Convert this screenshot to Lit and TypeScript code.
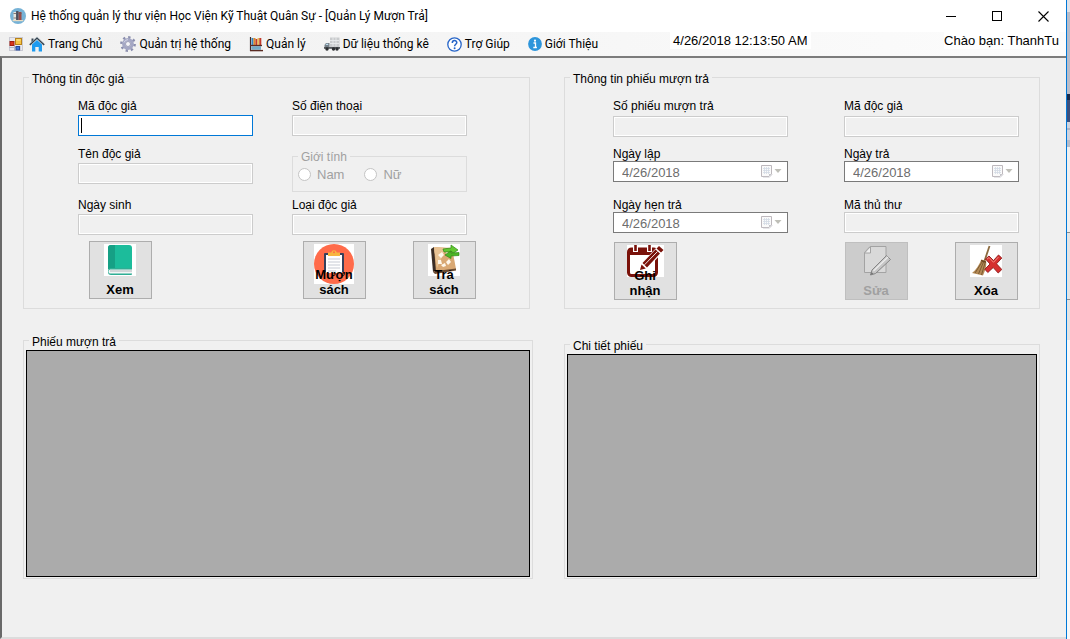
import { LitElement, html, css, svg, nothing, TemplateResult } from "lit";
import { customElement, property } from "lit/decorators.js";

const icon = (w: number, h: number, body: unknown) =>
  html`<svg width=${w} height=${h} viewBox="0 0 ${w} ${h}" aria-hidden="true">${body}</svg>`;

const appIcon = icon(16, 16, svg`
  <circle cx="8" cy="8" r="8" fill="#76b2d6"/>
  <rect x="3.5" y="4" width="2.6" height="8" fill="#e8e4dc"/>
  <rect x="6.1" y="3" width="2.4" height="9" fill="#4d4f5c"/>
  <rect x="8.5" y="4" width="3" height="8" fill="#9b4a45"/>
  <path d="M3.5 5.5h2.6M3.5 10h2.6M8.5 5.5h3" stroke="#6b5b5b" stroke-width=".8"/>
  <rect x="2.6" y="12" width="10.6" height="1.2" fill="#e9dcc3"/>`);

const formIcon = icon(14, 14, svg`
  <rect x=".5" y=".5" width="13" height="13" fill="#e8e8ee" stroke="#c9c9d2"/>
  <path d="M0 10.5h8M5.5 9v5M11 9v5" stroke="#b3b6c6"/>
  <rect x="1" y="4.5" width="4" height="4" fill="#d8341b" stroke="#9e1e10"/>
  <rect x="6.5" y="1.5" width="6" height="6" fill="#f6c343" stroke="#b8821a"/>
  <path d="M7.5 3h4" stroke="#fff0a8"/>
  <rect x="7" y="9.5" width="3.5" height="3.5" fill="#3f74d8" stroke="#24499b"/>`);

const homeIcon = icon(16, 16, svg`
  <path d="M3 15.5V8.5L8 4l5 4.500v7H9.700v-4.500H6.300v4.500z" fill="#1e9bf0"/>
  <path d="M2.500 2.500h2v3.500h-2z" fill="#3a4652"/>
  <path d="M.8 8.800L8 2l7.200 6.800" fill="none" stroke="#33424f" stroke-width="1.600"/>
  <path d="M1.500 7L8 .9 14.500 7" fill="none" stroke="#aeb9c2" stroke-width=".7"/>`);

const gearIcon = icon(16, 16, svg`
  <circle cx="8" cy="8" r="6.600" fill="none" stroke="#8b8fae" stroke-width="2.600" stroke-dasharray="2.300 2.880"/>
  <circle cx="8" cy="8" r="4.300" fill="none" stroke="#a4a7c4" stroke-width="3.200"/>
  <circle cx="8" cy="8" r="2.500" fill="#f4f4f8" stroke="#7d80a0" stroke-width=".7"/>
  <path d="M4 6.500A4.300 4.300 0 0 1 8 3.600" stroke="#d6d8ea" fill="none"/>`);

const booksIcon = icon(14, 15, svg`
  <path d="M1.500 0v14" stroke="#402a2a" stroke-width="1.200"/>
  <rect x="2.500" y="1" width="2" height="7" fill="#2f86c4"/>
  <rect x="4.500" y="1" width="2" height="7" fill="#e08a2c"/>
  <rect x="6.500" y="2" width="2" height="6" fill="#c23a2c"/>
  <rect x="8.500" y="1" width="1.800" height="7" fill="#e9c15a"/>
  <rect x="10.300" y="1" width="2" height="7" fill="#c23a2c"/>
  <path d="M1 8.500h12" stroke="#5a2b22" stroke-width="1.300"/>
  <rect x="2.500" y="9.500" width="9.500" height="3" fill="#2f7fa8"/>
  <path d="M2.500 11h9.500" stroke="#d9eef5" stroke-width=".8"/>
  <path d="M1 13.600h13" stroke="#5a2b22" stroke-width="1.400"/>`);

const truckIcon = icon(16, 14, svg`
  <rect x="6" y=".5" width="9.500" height="9.500" fill="#c9cbcd"/>
  <path d="M6 3.500h9M6 6.500h9M9 .5v9M12 .5v9" stroke="#e9ebec" stroke-width=".9"/>
  <path d="M.5 11V8l1.500-2h3.500v5z" fill="#77818a"/>
  <path d="M1.500 8l.8-1.200h1.900V8z" fill="#bfe0ee"/>
  <rect x="0" y="10" width="16" height="1.800" fill="#54585c"/>
  <circle cx="3" cy="12" r="1.700" fill="#2c2e30"/><circle cx="9.500" cy="12" r="1.700" fill="#2c2e30"/>
  <circle cx="13" cy="12" r="1.700" fill="#2c2e30"/>`);

const helpIcon = icon(15, 15, svg`
  <circle cx="7.500" cy="7.500" r="6.700" fill="#fff" stroke="#2765c8" stroke-width="1.300"/>
  <path d="M5.300 5.900c0-3 4.500-3 4.500-.3 0 1.700-2.200 1.700-2.200 3.600" fill="none" stroke="#2765c8" stroke-width="1.500"/>
  <circle cx="7.600" cy="11.300" r="1" fill="#2765c8"/>`);

const infoIcon = icon(14, 14, svg`
  <circle cx="7" cy="7" r="6.900" fill="#2d95db"/>
  <circle cx="7" cy="3.700" r="1.100" fill="#fff"/>
  <path d="M5.500 6h2v4.500M5.300 10.500h3.600" fill="none" stroke="#fff" stroke-width="1.300"/>`);

const calendarIcon = icon(21, 13, svg`
  <path d="M.5 .5h10v8.500l-2.500 2.500h-7.500z" fill="#fafafa" stroke="#bdb8bd"/>
  <path d="M2 3.500h7M2 5.500h7M2 7.500h7M3.500 2v7M5.500 2v7M7.500 2v7" stroke="#d3dbe4" stroke-width=".8"/>
  <path d="M10.500 9h-2.500v2.500z" fill="#c4c4ca"/>
  <path d="M2 12.300h6.500l3-3" stroke="#d8d8dc" fill="none" stroke-width=".8"/>
  <path d="M13.500 4h7l-3.500 4z" fill="#bfbfb8"/>`);

const bookArt = icon(32, 32, svg`
  <rect width="32" height="32" fill="#fff"/>
  <path d="M7 1h18a3 3 0 0 1 3 3v21H4V4a3 3 0 0 1 3-3z" fill="#1cbc9b"/>
  <path d="M7 1h4v24H4V4a3 3 0 0 1 3-3z" fill="#16a085"/>
  <path d="M4 27a3 3 0 0 1 3-3h21v6a1 1 0 0 1-1 1H7a3 3 0 0 1-3-3z" fill="#2fae94"/>
  <path d="M6 25.500h22v4H7a2 2 0 0 1-1-4z" fill="#f2f5f5"/>
  <path d="M6 27h22" stroke="#b9c0c4" stroke-width="1.200"/>`);

const borrowArt = icon(40, 40, svg`
  <rect width="40" height="40" fill="#fff"/>
  <circle cx="20" cy="20" r="20" fill="#ff6b4a"/>
  <path d="M10 10a1 1 0 0 1 1-1h18a1 1 0 0 1 1 1v18H10z" fill="#36405c"/>
  <rect x="12" y="11" width="16" height="18" fill="#fff"/>
  <path d="M14 12V8.500h3.200a2.900 2.900 0 0 1 5.600 0H26V12z" fill="#f8b640"/>
  <circle cx="20" cy="8.300" r="1" fill="#ff6b4a"/>
  <path d="M14 15h12M14 18h12M14 21h12M14 24h12M14 27h8" stroke="#c7cbd4"/>`);

const returnArt = icon(32, 32, svg`
  <rect width="32" height="32" fill="#fff"/>
  <path d="M3 5l3-2 3 23-4 2z" fill="#3b2d25"/>
  <path d="M6 3l18 1 4 21-20 3z" fill="#d9a873"/>
  <path d="M6 3l12 1-9 20z" fill="#e8c293"/>
  <path d="M5 28l3-1 20-2.500v2L7 30z" fill="#6a4a30"/>
  <path d="M10 11l4-3 2 3-3 3zM18 8l4 1 1 4-4-1zM21 15l2 3-3 3-2-3zM10 16l3 0 1 4-4 0zM13 21l4-2 1 3-3 1z" fill="#fff7ea"/>
  <path d="M15 5l8-1V1l7 5-6 4V7.500l-8 .5z" fill="#63c832" stroke="#2f8a17" stroke-width=".7"/>
  <path d="M31 8.500l-8 .5V6.800L17 11l6 3.500V12l8-.5z" fill="#4db526" stroke="#2f8a17" stroke-width=".7"/>`);

const recordArt = icon(37, 32, svg`
  <rect width="37" height="32" fill="#fff"/>
  <rect x="1.500" y="4" width="28" height="26.500" rx="3" fill="none" stroke="#7a120a" stroke-width="3"/>
  <path d="M1 10V6a3 3 0 0 1 3-3h23a3 3 0 0 1 3 3v4z" fill="#7a120a"/>
  <path d="M8.500 0v7M22.500 0v7" stroke="#fff" stroke-width="5"/>
  <path d="M8.500 0v6M22.500 0v6" stroke="#7a120a" stroke-width="2.600"/>
  <path d="M12 27l2-8L31 1l6 5-17 18z" fill="#fff"/>
  <path d="M13 25l1.500-5.500 4.300 4zM15.500 18L28.500 4.500l4.500 4L20 22.500zM29.500 3.500L32 1l4.500 4L34 7.500z" fill="#7a120a"/>
  <path d="M17.500 19.800L30.500 6.500" stroke="#fff" stroke-width=".9"/>`);

const editArt = icon(32, 32, svg`
  <path d="M10 1.500h16v26H4.500V7.500z" fill="#d9d9d9" stroke="#a3a3a3"/>
  <path d="M10.500 1.500v6.500H4.500z" fill="#efefef" stroke="#a3a3a3"/>
  <path d="M10.500 30l1.500-5L26.500 10.500l4 4L15.500 28.500z" fill="#c6c6c6" stroke="#858585"/>
  <path d="M13.500 26L28 12" stroke="#ececec" stroke-width="1.300"/>
  <path d="M10.500 30l1-3 2 1.800z" fill="#777"/>`);

const deleteArt = icon(32, 32, svg`
  <rect width="32" height="32" fill="#fff"/>
  <path d="M19.500 1L14.500 16" stroke="#8b6a3e" stroke-width="1.800"/>
  <path d="M11.500 14.500l4.500 1.500c1 5-1 10-3 14.500L2 28c4-3 7-8 9.500-13.500z" fill="#b48a55"/>
  <path d="M12 17L5 28M13.500 17L8.500 29M15 18l-3.500 12" stroke="#75552f" stroke-width=".9"/>
  <path d="M11 15.500l5 1.700" stroke="#6a4520" stroke-width="1.500"/>
  <path d="M15.500 14l3.500-3 4.500 4.500L28.500 10l3.300 3-5.300 5.800 5.300 5.700-3.600 3.500-5-5.500-5.400 5-3-3.300 5.200-5.200z" fill="#d62f2f" stroke="#8f1717" stroke-width=".9"/>
  <path d="M17 14.200l2-1.700 4.500 4.800 5-5.300" fill="none" stroke="#f28a80" stroke-width="1"/>`);

@customElement("text-field")
export class TextField extends LitElement {
  @property() label = "";
  @property() value = "";
  @property() kind: "text" | "date" = "text";
  @property({ type: Boolean }) active = false;

  static styles = css`
    :host { display: block; }
    .label { display: block; line-height: 13px; white-space: nowrap; }
    .box {
      display: flex; align-items: center; box-sizing: border-box; height: 21px;
      margin-top: var(--field-gap, 2px);
      border: 1px solid #ccc; box-shadow: inset 0 0 0 1px #fff; background: #f0f0f0;
    }
    .box.active { border-color: #0078d7; background: #fff; }
    .box.date { border-color: #7a7a7a; background: #fff; padding: 0 5px 0 8px; }
    .input {
      flex: 1; min-width: 0; height: 100%; box-sizing: border-box; padding: 0; border: 0; outline: 0;
      background: transparent; font: inherit; color: #6d6d6d;
    }
    .date .input { font-size: 13px; padding-top: 2px; }
    .active .input {
      caret-color: transparent;
      background: linear-gradient(#000, #000) 2px 2px / 1px 15px no-repeat;
    }
  `;

  render() {
    return html`
      <label class="label" for="input">${this.label}</label>
      <div class="box ${this.kind} ${this.active ? "active" : ""}">
        <input class="input" id="input" type="text" .value=${this.value} ?disabled=${!this.active} />
        ${this.kind === "date" ? calendarIcon : nothing}
      </div>`;
  }
}

@customElement("picture-button")
export class PictureButton extends LitElement {
  @property({ attribute: false }) art: TemplateResult | null = null;
  @property({ attribute: false }) lines: string[] = [];
  @property({ type: Boolean }) disabled = false;

  static styles = css`
    :host { display: block; }
    .button {
      display: grid; width: 63px; height: 58px; box-sizing: border-box; padding: 2px 1px 1px 0;
      border: 1px solid #adadad; background: #e1e1e1; color: #000;
      font: bold 13px/15px "Liberation Sans", Arial, sans-serif;
    }
    .button:disabled { background: #ccc; border-color: #bfbfbf; color: #a0a0a0; }
    .art, .text { grid-area: 1 / 1; justify-self: center; }
    .art { align-self: start; height: 32px; }
    .text { align-self: end; z-index: 1; }
    .line { display: block; }
  `;

  render() {
    return html`<button class="button" type="button" ?disabled=${this.disabled}>
      <span class="art">${this.art}</span>
      <span class="text">${this.lines.map((l) => html`<span class="line">${l}</span>`)}</span>
    </button>`;
  }
}

const menu: [TemplateResult, string][] = [
  [homeIcon, "Trang Chủ"],
  [gearIcon, "Quản trị hệ thống"],
  [booksIcon, "Quản lý"],
  [truckIcon, "Dữ liệu thống kê"],
  [helpIcon, "Trợ Giúp"],
  [infoIcon, "Giới Thiệu"],
];

@customElement("app-root")
export class AppRoot extends LitElement {
  static styles = css`
    :host {
      display: flex; min-height: 100vh; background: #f0f0f0; color: #000;
      font: 12px/15px "Liberation Sans", Arial, sans-serif;
    }
    .window { flex: 1; min-width: 0; display: flex; flex-direction: column; border-right: 1px solid #0078d7; }
    .desktop {
      width: 3px;
      background: linear-gradient(#e2e2e8 0 12px, #b9bcc9 12px 94px, #1b2a4a 94px 100px, #3c4f7c 100px 122px,
        #cfd3df 122px 128px, #aeb4c4 128px 130px, #cfd3df 130px 140px, #b5bccb 140px 147px, #f0f0f0 147px 232px,
        #8c8c8c 232px 233px, #e4e4e4 233px 299px, #8c8c8c 299px 300px, #e4e4e4 300px 340px, #f8f8f8 340px);
    }
    .titlebar {
      display: flex; align-items: center; height: 32px; padding-left: 10px; background: #fff;
      font: 12px/16px Roboto, "Open Sans", sans-serif;
    }
    .title { flex: 1; margin: 0 0 0 5px; font: inherit; white-space: nowrap; }
    .caption { width: 46px; height: 32px; padding: 0; border: 0; background: none; display: grid; place-items: center; }
    .menubar {
      display: flex; align-items: center; height: 24px; padding: 0 7px 0 9px;
      background: linear-gradient(90deg, #f0f0f0, #fcfcfc);
    }
    .menu { display: flex; gap: 18px; margin-left: 6px; }
    .item {
      display: flex; align-items: center; gap: 3px; padding: 0; border: 0; background: none; color: #000;
      font: 12px/16px Roboto, "Open Sans", sans-serif; white-space: nowrap;
    }
    .clock, .greeting { align-self: flex-start; font-size: 13px; line-height: 17px; white-space: nowrap; }
    .clock { margin-left: 72px; padding: 0 3px; background: #fff; }
    .greeting { margin-left: auto; background: #fff; }
    .client {
      flex: 1; display: grid; grid-template-columns: 510fr 476fr; grid-template-rows: auto 1fr;
      column-gap: 31px; row-gap: 23px; padding: 11px 26px 58px 21px;
      border: solid #696969; border-width: 2px 0 0 2px; border-top-color: #7c7c7c;
      border-bottom: 2px solid #dcdcdc;
    }
    .group { min-width: 0; margin: 0; padding: 0; border: 1px solid #dcdcdc; }
    .legend { margin-left: 5px; padding: 4px 3px 0; line-height: 13px; }
    .reader { margin-right: 3px; }
    .form {
      display: grid; grid-template-columns: 175px 175px; grid-template-rows: 48px 51px 42px 58px;
      padding: 14px 0 9px;
    }
    .reader .form { column-gap: 39px; padding-left: 54px; }
    .ticket .form { column-gap: 56px; padding-left: 48px; }
    .ticket { --field-gap: 3px; }
    .tight { --field-gap: 0px; }
    .actions { display: flex; gap: 47px; }
    .reader .actions { margin-left: 11px; }
    .ticket .actions { margin: 1px 0 0 1px; }
    .gender {
      align-self: start; box-sizing: border-box; height: 44px;
      display: flex; gap: 20px; color: #a0a0a0; font-size: 13px;
    }
    .gender .legend { font-size: 12px; padding-top: 3px; }
    .choice { display: flex; align-items: center; gap: 6px; height: 21px; }
    .gender .choice:first-of-type { margin-left: 5px; }
    .radio {
      appearance: none; width: 13px; height: 13px; margin: 0; border: 1px solid #c4c4c4;
      border-radius: 50%; background: #fff;
    }
    .list { display: flex; flex-direction: column; padding: 1px 2px; }
    .list .legend { margin-left: 3px; }
    .list.offset { margin-top: 4px; }
    .data { flex: 1; min-height: 120px; border: 1px solid #000; background: #ababab; }
  `;

  render() {
    return html`
      <div class="window">
        <header class="titlebar">
          ${appIcon}
          <h1 class="title">Hệ thống quản lý thư viện Học Viện Kỹ Thuật Quân Sự - [Quản Lý Mượn Trả]</h1>
          <button class="caption" aria-label="Minimize">${icon(11, 11, svg`<path d="M0 5.500h10" stroke="#000"/>`)}</button>
          <button class="caption" aria-label="Maximize">${icon(11, 11, svg`<rect x=".5" y=".5" width="9" height="9" fill="none" stroke="#000"/>`)}</button>
          <button class="caption" aria-label="Close">${icon(11, 11, svg`<path d="M.5 .5l10 10M10.500 .5l-10 10" stroke="#000" stroke-width="1.100"/>`)}</button>
        </header>
        <div class="menubar">
          ${formIcon}
          <nav class="menu">
            ${menu.map(([glyph, name]) => html`<button class="item" type="button">${glyph}${name}</button>`)}
          </nav>
          <time class="clock">4/26/2018 12:13:50 AM</time>
          <span class="greeting">Chào bạn: ThanhTu</span>
        </div>
        <main class="client">
          <fieldset class="group reader">
            <legend class="legend">Thông tin độc giả</legend>
            <div class="form">
              <text-field label="Mã độc giả" active></text-field>
              <text-field label="Số điện thoại"></text-field>
              <text-field label="Tên độc giả"></text-field>
              <fieldset class="group gender" disabled>
                <legend class="legend">Giới tính</legend>
                <label class="choice"><input class="radio" type="radio" name="gender" />Nam</label>
                <label class="choice"><input class="radio" type="radio" name="gender" />Nữ</label>
              </fieldset>
              <text-field label="Ngày sinh"></text-field>
              <text-field label="Loại độc giả"></text-field>
              <div class="actions">
                <picture-button .art=${bookArt} .lines=${["Xem"]}></picture-button>
              </div>
              <div class="actions">
                <picture-button .art=${borrowArt} .lines=${["Mượn", "sách"]}></picture-button>
                <picture-button .art=${returnArt} .lines=${["Trả", "sách"]}></picture-button>
              </div>
            </div>
          </fieldset>
          <fieldset class="group ticket">
            <legend class="legend">Thông tin phiếu mượn trả</legend>
            <div class="form">
              <text-field label="Số phiếu mượn trả"></text-field>
              <text-field label="Mã độc giả"></text-field>
              <text-field class="tight" kind="date" label="Ngày lập" value="4/26/2018"></text-field>
              <text-field class="tight" kind="date" label="Ngày trả" value="4/26/2018"></text-field>
              <text-field class="tight" kind="date" label="Ngày hẹn trả" value="4/26/2018"></text-field>
              <text-field class="tight" label="Mã thủ thư"></text-field>
              <div class="actions">
                <picture-button .art=${recordArt} .lines=${["Ghi", "nhận"]}></picture-button>
              </div>
              <div class="actions">
                <picture-button .art=${editArt} .lines=${["Sửa"]} disabled></picture-button>
                <picture-button .art=${deleteArt} .lines=${["Xóa"]}></picture-button>
              </div>
            </div>
          </fieldset>
          <fieldset class="group list">
            <legend class="legend">Phiếu mượn trả</legend>
            <div class="data"></div>
          </fieldset>
          <fieldset class="group list offset">
            <legend class="legend">Chi tiết phiếu</legend>
            <div class="data"></div>
          </fieldset>
        </main>
      </div>
      <div class="desktop"></div>`;
  }
}
